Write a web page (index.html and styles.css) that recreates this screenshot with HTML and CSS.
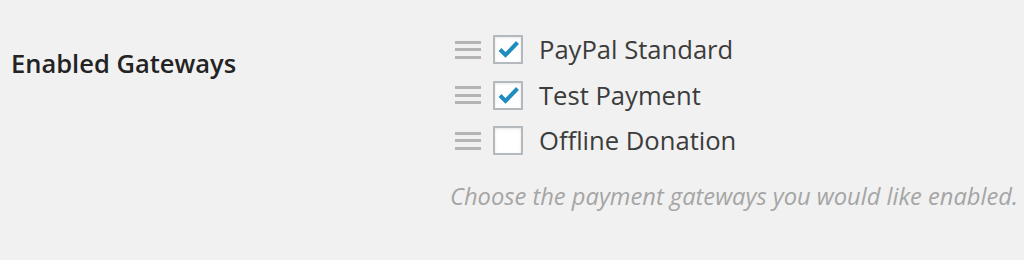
FILE: index.html
```html
<!DOCTYPE html>
<html>
<head>
<meta charset="utf-8">
<link rel="stylesheet" href="styles.css">
</head>
<body>
<div class="setting">
  <div class="setting-label">Enabled Gateways</div>
  <div class="setting-field">
    <ul class="gateways">
      <li class="gateway">
        <span class="handle"><i></i><i></i><i></i></span>
        <span class="checkbox checked"><svg viewBox="0 0 26 25"><path d="M5 12.5 L10.5 18 L22.5 5.5" /></svg></span>
        <span class="gateway-name">PayPal Standard</span>
      </li>
      <li class="gateway">
        <span class="handle"><i></i><i></i><i></i></span>
        <span class="checkbox checked"><svg viewBox="0 0 26 25"><path d="M5 12.5 L10.5 18 L22.5 5.5" /></svg></span>
        <span class="gateway-name">Test Payment</span>
      </li>
      <li class="gateway">
        <span class="handle"><i></i><i></i><i></i></span>
        <span class="checkbox"></span>
        <span class="gateway-name">Offline Donation</span>
      </li>
    </ul>
    <p class="description">Choose the payment gateways you would like enabled.</p>
  </div>
</div>
</body>
</html>
```

FILE: styles.css
```css
html, body {
  margin: 0;
  padding: 0;
  background: #f1f1f1;
}
body {
  font-family: "Open Sans", "Noto Sans", sans-serif;
  width: 1024px;
  height: 260px;
  overflow: hidden;
}
.setting {
  display: flex;
  padding-top: 27px;
}
.setting-label {
  width: 443px;
  padding-left: 11px;
  box-sizing: border-box;
  font-size: 25.5px;
  font-weight: 600;
  color: #232323;
  line-height: 36px;
  padding-top: 18px;
}
.setting-field {
  flex: 1;
}
.gateways {
  list-style: none;
  margin: 0;
  padding: 0;
}
.gateway {
  display: flex;
  align-items: center;
  height: 45.5px;
}
.handle {
  display: flex;
  flex-direction: column;
  gap: 4.5px;
  width: 26px;
  margin-left: 12px;
  margin-right: 12px;
}
.handle i {
  display: block;
  height: 3px;
  background: #b4b4b4;
}
.checkbox {
  box-sizing: border-box;
  width: 30px;
  height: 29px;
  border: 2px solid #b4b9be;
  background: #fff;
  box-shadow: inset 0 1px 3px rgba(0,0,0,0.1);
  display: flex;
}
.checkbox svg {
  width: 26px;
  height: 25px;
  fill: none;
  stroke: #1e8cbe;
  stroke-width: 4;
}
.gateway-name {
  margin-left: 16px;
  font-size: 25.6px;
  color: #3c3c3c;
}
.description {
  margin: 16px 0 0 7px;
  font-size: 23.7px;
  font-style: italic;
  color: #a5a5a5;
}
```
